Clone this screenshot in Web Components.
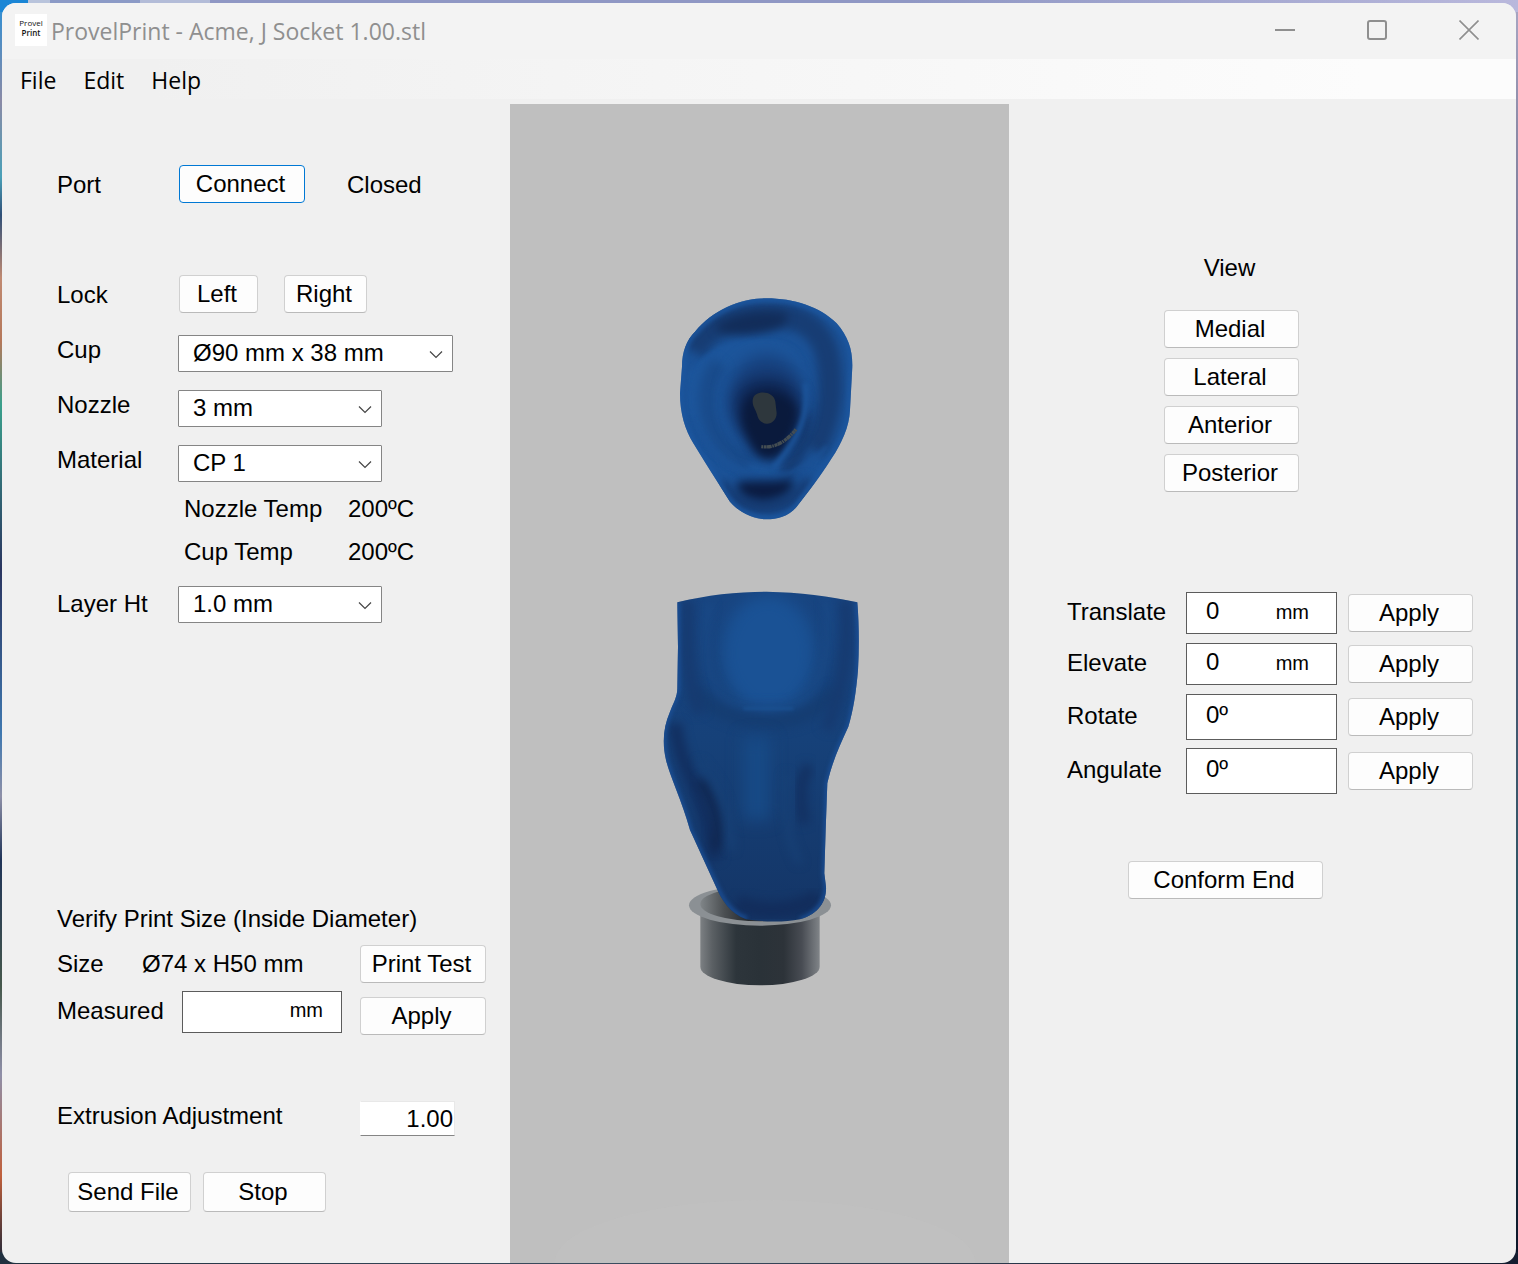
<!DOCTYPE html>
<html lang="en">
<head>
<meta charset="utf-8">
<title>ProvelPrint - Acme, J Socket 1.00.stl</title>
<style>
  body {
    margin: 0;
    min-height: 100vh;
    box-sizing: border-box;
    padding: 3px 2px 1px 2px;
    display: flex;
    font: 24px/30px "Liberation Sans", Arial, sans-serif;
    color: #000;
    background:
      linear-gradient(90deg, #1a86d6 0 28px, #b9c4dc 28px 50px, #8b9ac6 50px 140px, #b3bcd8 140px 210px, #8f97c4 210px 60%, #b9b8dc) top / 100% 12px no-repeat,
      linear-gradient(90deg, #20303f, #3b4d60 40%, #141d30) bottom / 100% 12px no-repeat,
      linear-gradient(#a9a7c4, #8d8ba8 10%, #5b5f80 40%, #20505c 80%, #0b1226) right / 8px 100% no-repeat,
      linear-gradient(#2b8fd6, #8a8aa6 8%, #4aa0b8 14%, #305078 17%, #c08a72 22%, #b5785a 27%, #3aa08c 32%, #2a3560 45%, #3f78b0 58%, #8e90a8 63%, #203458 68%, #46584c 78%, #8f8fa8 85%, #c0603c 93%, #182438) #4a5878;
  }
  pp-window { flex: 1; }
  pp-stack.settings { padding: 66px 0 51px 55px; }
  pp-stack.adjust { padding: 154px 0 51px 58px; }
</style>
</head>
<body>
<pp-window caption="ProvelPrint - Acme, J Socket 1.00.stl">
  <pp-stack class="settings" slot="left">
    <pp-line label="Port" style="--gap:42px">
      <pp-button primary style="--w:126px">Connect</pp-button><span>Closed</span>
    </pp-line>
    <pp-line label="Lock" style="--gap:26px;margin-top:72px">
      <pp-button style="--w:79px">Left</pp-button><pp-button style="--w:83px">Right</pp-button>
    </pp-line>
    <pp-select label="Cup" options="Ø90 mm x 38 mm" style="--w:275px;margin-top:22px"></pp-select>
    <pp-select label="Nozzle" options="3 mm" style="margin-top:18px"></pp-select>
    <pp-select label="Material" options="CP 1" style="margin-top:18px"></pp-select>
    <pp-temps style="margin-top:5px"></pp-temps>
    <pp-select label="Layer Ht" options="1.0 mm" style="--label-line:36px;margin-top:13px"></pp-select>
    <pp-verify style="margin-top:auto"></pp-verify>
    <pp-field plain label="Extrusion Adjustment" value="1.00" style="--label-col:303px;--w:95px;--h:35px;margin-top:66px"></pp-field>
    <pp-group style="--gap:12px;margin:36px 0 0 11px">
      <pp-button style="--w:123px;--h:40px">Send File</pp-button><pp-button style="--w:123px;--h:40px">Stop</pp-button>
    </pp-group>
  </pp-stack>
  <pp-viewport slot="centre"></pp-viewport>
  <pp-stack class="adjust" slot="right">
    <pp-views></pp-views>
    <pp-group style="--gap:11px;margin-top:100px">
      <pp-field label="Translate" value="0" unit="mm"></pp-field><pp-button style="--w:125px">Apply</pp-button>
    </pp-group>
    <pp-group style="--gap:11px;margin-top:9px">
      <pp-field label="Elevate" value="0" unit="mm"></pp-field><pp-button style="--w:125px">Apply</pp-button>
    </pp-group>
    <pp-group style="--gap:11px;margin-top:9px">
      <pp-field label="Rotate" value="0º" style="--h:46px"></pp-field><pp-button style="--w:125px">Apply</pp-button>
    </pp-group>
    <pp-group style="--gap:11px;margin-top:8px">
      <pp-field label="Angulate" value="0º" style="--h:46px"></pp-field><pp-button style="--w:125px">Apply</pp-button>
    </pp-group>
    <pp-group style="margin:67px 0 0 61px"><pp-button style="--w:195px">Conform End</pp-button></pp-group>
  </pp-stack>
</pp-window>

<script>
const define = (name, render) => customElements.define(name, class extends HTMLElement {
  constructor() {
    super();
    this.attachShadow({ mode: "open" }).innerHTML = render(this);
  }
});
const attr = (el, name) => el.getAttribute(name) || "";

define("pp-window", el => `
<style>
  :host { display: flex; flex-direction: column; border-radius: 14px; overflow: hidden; background: #f0f0f0; }
  header { display: flex; align-items: center; height: 56px; background: #f3f3f3; color: #8f8f8f; font: 23px/30px "Open Sans", "Noto Sans", sans-serif; }
  .logo { width: 32px; height: 24px; padding: 4px 0; margin: 0 4px 2px 13px; background: #fff; color: #111; font: 8px/10px "Open Sans", sans-serif; text-align: center; }
  .logo b { display: block; font-weight: 600; }
  h1 { flex: 1; margin: 0; font: inherit; }
  header button { width: 92px; height: 56px; padding: 0 2px 2px 0; border: 0; background: none; display: flex; align-items: center; justify-content: center; }
  nav { display: flex; gap: 26px; height: 40px; padding: 0 17px; background: linear-gradient(90deg, #f0f0f0 10%, #fcfcfc 90%); }
  nav button { padding: 0 0 0 1px; border: 0; background: none; color: #000; font: 23px/42px "Open Sans", "Noto Sans", sans-serif; }
  main { flex: 1; display: grid; grid-template-columns: 508fr 499fr 507fr; }
  slot { display: grid; min-width: 0; }
  svg { fill: none; stroke: #8f8f8f; stroke-width: 2; }
</style>
<header>
  <div class="logo">Provel<b>Print</b></div>
  <h1>${attr(el, "caption")}</h1>
  <button aria-label="Minimize"><svg width="20" height="20"><path d="M0 10H20"/></svg></button>
  <button aria-label="Maximize"><svg width="20" height="20"><rect x="1" y="1" width="18" height="18" rx="2"/></svg></button>
  <button aria-label="Close"><svg width="20" height="20"><path d="M.5 .5 19.5 19.5M19.5 .5.5 19.5" stroke-width="1.6"/></svg></button>
</header>
<nav><button>File</button><button>Edit</button><button>Help</button></nav>
<main><slot name="left"></slot><slot name="centre"></slot><slot name="right"></slot></main>`);

define("pp-stack", () => `
<style>:host { display: flex; flex-direction: column; box-sizing: border-box; }</style><slot></slot>`);

define("pp-group", () => `
<style>:host { display: flex; align-items: center; gap: var(--gap, 0); }</style><slot></slot>`);

define("pp-line", el => `
<style>
  :host { display: grid; grid-template-columns: 122px auto; height: 38px; line-height: 40px; }
  div { display: flex; align-items: flex-start; gap: var(--gap); }
</style><span>${attr(el, "label")}</span><div><slot></slot></div>`);

define("pp-button", el => `
<style>
  :host { display: block; }
  button { display: block; box-sizing: border-box; width: var(--w, 135px); height: var(--h, 38px); padding: 0 3px 0 0; border: 1px solid #d0d0d0; border-bottom-color: #bababa; border-radius: 4px; background: #fdfdfd; color: #000; font: inherit; line-height: 36px; white-space: nowrap; }
  :host([primary]) button { border-color: #0078d4; }
</style><button><slot></slot></button>`);

define("pp-select", el => `
<style>
  :host { display: grid; grid-template-columns: 121px var(--w, 204px); align-items: start; }
  label { line-height: var(--label-line, 30px); }
  div { display: grid; align-items: center; }
  select, svg { grid-area: 1 / 1; }
  select { appearance: none; box-sizing: border-box; height: 37px; margin: 0; padding: 0 34px 1px 14px; border: 1px solid #858585; border-radius: 1px; background: #fff; color: #000; font: inherit; }
  svg { justify-self: end; margin: 2px 10px 0 0; pointer-events: none; }
</style>
<label for="s">${attr(el, "label")}</label>
<div><select id="s"><option>${attr(el, "options")}</option></select>
<svg width="14" height="9" fill="none" stroke="#444" stroke-width="1.2"><path d="M1 1.5 7 7.5 13 1.5"/></svg></div>`);

define("pp-field", el => `
<style>
  :host { display: grid; grid-template-columns: var(--label-col, 119px) var(--w, 151px); align-items: center; }
  label { line-height: 30px; padding-bottom: 2px; }
  div { box-sizing: border-box; height: var(--h, 42px); display: flex; align-items: baseline; padding: var(--pad, 3px 27px 0 19px); border: 1px solid #5c5c5c; background: #fff; }
  input { flex: 1; min-width: 0; width: 0; height: calc(var(--h, 42px) - 12px); box-sizing: border-box; margin: 0; padding: 0; border: 0; outline: 0; background: none; color: #000; font: inherit; }
  span { font-size: 20px; }
  :host([plain]) { align-items: start; }
  :host([plain]) label { padding: 0; }
  :host([plain]) div { padding: 1px 1px 0; border-color: #e8e8e8 #e8e8e8 #858585 #fff; }
  :host([plain]) input { text-align: right; height: 32px; }
</style>
<label for="i">${attr(el, "label")}</label>
<div><input id="i" value="${attr(el, "value")}">${attr(el, "unit") ? `<span>${attr(el, "unit")}</span>` : ""}</div>`);

define("pp-temps", () => `
<style>
  :host { display: block; padding-left: 127px; }
  dl { display: grid; grid-template-columns: 164px auto; margin: 0; line-height: 43px; }
  dd { margin: 0; }
</style>
<dl><dt>Nozzle Temp</dt><dd>200ºC</dd><dt>Cup Temp</dt><dd>200ºC</dd></dl>`);

define("pp-verify", () => `
<style>
  :host { display: block; }
  h2 { margin: 0 0 11px; font: inherit; }
  .cols { display: grid; grid-template-columns: 303px auto; }
  .size { display: grid; grid-template-columns: 85px auto; line-height: 38px; margin-bottom: 8px; }
  .buttons { display: flex; flex-direction: column; gap: 14px; --w: 126px; }
  pp-field { --label-col: 125px; --w: 160px; --pad: 2px 18px 0; }
</style>
<h2>Verify Print Size (Inside Diameter)</h2>
<div class="cols">
  <div>
    <div class="size"><span>Size</span><span>Ø74 x H50 mm</span></div>
    <pp-field label="Measured" unit="mm"></pp-field>
  </div>
  <div class="buttons"><pp-button>Print Test</pp-button><pp-button>Apply</pp-button></div>
</div>`);

define("pp-views", () => `
<style>
  :host { display: flex; flex-direction: column; gap: 10px; width: 135px; margin-left: 97px; }
  h2 { margin: 0 0 17px; padding-right: 4px; font: inherit; text-align: center; }
</style>
<h2>View</h2>
<pp-button>Medial</pp-button><pp-button>Lateral</pp-button><pp-button>Anterior</pp-button><pp-button>Posterior</pp-button>`);

define("pp-viewport", () => `
<style>
  :host { display: block; margin-top: 5px; background: #bfbfbf; }
  svg { display: block; width: 100%; }
  filter { color-interpolation-filters: sRGB; }
</style>
<svg viewBox="510 104 499 1159" role="img" aria-label="Socket model, top and front views">
  <defs>
    <filter id="b6" x="-50%" y="-50%" width="200%" height="200%"><feGaussianBlur stdDeviation="6"/></filter>
    <filter id="b14" x="-60%" y="-60%" width="220%" height="220%"><feGaussianBlur stdDeviation="14"/></filter>
    <filter id="b24" x="-80%" y="-80%" width="260%" height="260%"><feGaussianBlur stdDeviation="24"/></filter>
    <filter id="v24" filterUnits="userSpaceOnUse" x="200" y="350" width="320" height="500"><feGaussianBlur stdDeviation="24"/></filter>
    <filter id="h6" filterUnits="userSpaceOnUse" x="250" y="350" width="270" height="70"><feGaussianBlur stdDeviation="5"/></filter>
    <filter id="edge"><feGaussianBlur stdDeviation="1.2"/></filter>
    <linearGradient id="body"><stop offset="0" stop-color="#7c8083"/><stop offset=".1" stop-color="#5b6064"/><stop offset=".3" stop-color="#2d353b"/><stop offset=".5" stop-color="#2a3238"/><stop offset=".7" stop-color="#2d3339"/><stop offset=".85" stop-color="#484c53"/><stop offset="1" stop-color="#808488"/></linearGradient>
    <linearGradient id="inside"><stop offset="0" stop-color="#808588"/><stop offset=".2" stop-color="#4b4f52"/><stop offset=".4" stop-color="#24292e"/><stop offset="1" stop-color="#777c80"/></linearGradient>
    <linearGradient id="front" x1="0" y1="0" x2="0" y2="1"><stop offset="0" stop-color="#184581"/><stop offset=".45" stop-color="#164179"/><stop offset="1" stop-color="#143566"/></linearGradient>
    <path id="topShape" d="M320 55C400 55 480 80 530 130C565 170 578 210 577 260L570 390C568 440 545 490 515 535C480 590 450 630 410 680C385 710 350 718 320 718C285 718 240 700 210 665C175 610 140 555 100 490C75 450 60 400 60 340L66 260C66 215 80 180 105 155C160 90 240 55 320 55Z"/>
    <path id="frontShape" d="M112 67C200 45 290 35 380 35C480 37 570 48 652 67C657 130 658 200 654 270C648 340 640 390 625 440C600 495 578 540 562 610L557 750L553 880L558 920C560 960 540 1000 480 1018C430 1028 370 1026 318 1018C270 1000 245 960 230 925L150 750C125 660 90 590 78 540C66 490 70 440 90 395C100 370 112 350 112 325L114 200Z"/>
    <clipPath id="topClip"><use href="#topShape"/></clipPath>
    <clipPath id="frontClip"><use href="#frontShape"/></clipPath>
  </defs>
  <ellipse cx="765" cy="1262" rx="210" ry="62" fill="#c2c2c2" opacity=".35"/>
  <g transform="translate(660 280) scale(.33333)">
    <use href="#topShape" fill="#1b5297" filter="url(#edge)"/>
    <g clip-path="url(#topClip)">
      <path d="M100 215C150 125 240 105 340 105C430 110 490 150 505 240C520 330 510 420 460 510" fill="none" stroke="#173d74" stroke-width="72" filter="url(#b14)"/>
      <path d="M170 135C230 95 320 85 380 100C390 125 370 145 320 155C260 170 200 165 170 150Z" fill="#122d5a" filter="url(#b14)"/>
      <path d="M85 280C140 210 200 176 320 178C390 180 430 230 445 300C460 380 430 480 380 590C260 610 150 540 100 440C80 390 75 340 85 280Z" fill="#1c559b" filter="url(#b6)"/>
      <path d="M180 250C130 310 130 400 175 470C200 510 230 530 270 550" fill="none" stroke="#194b8b" stroke-width="50" filter="url(#b14)"/>
      <path d="M430 400C450 450 430 520 370 580" fill="none" stroke="#163c73" stroke-width="44" filter="url(#b14)"/>
      <ellipse cx="320" cy="360" rx="118" ry="135" fill="#17407c" filter="url(#b24)"/>
      <path d="M235 340C260 285 370 275 405 335C435 385 410 450 375 510C345 545 305 545 280 505C250 450 210 400 235 340Z" fill="#0e2450" filter="url(#b24)"/>
      <path d="M250 385C260 320 380 320 410 385C415 440 385 480 358 520C330 545 295 535 280 500C260 460 240 430 250 385Z" fill="#0a1a3c" filter="url(#b14)"/>
      <path d="M435 310C450 400 420 470 340 565" fill="none" stroke="#1c559b" stroke-width="14" filter="url(#b6)"/>
      <path d="M95 420C150 530 230 590 320 592C390 590 450 560 500 500" fill="none" stroke="#1b5195" stroke-width="10" filter="url(#b6)"/>
      <path d="M180 610C250 710 380 710 450 600" fill="none" stroke="#163c74" stroke-width="40" filter="url(#b14)"/>
      <path d="M230 606C280 598 340 606 395 596C415 625 370 660 310 664C260 660 230 640 230 606Z" fill="#0b1c42" filter="url(#b14)"/>
      <path d="M320 58C400 58 480 83 528 132C563 172 575 210 574 260L567 390C565 440 542 490 512 533L410 677C385 707 350 714 320 714C285 714 240 698 212 663L103 490C78 450 63 400 63 340L69 260C69 215 83 180 108 157C160 93 240 58 320 58Z" fill="none" stroke="#1c57a0" stroke-width="12" filter="url(#b6)"/>
    </g>
    <path d="M300 338C320 334 344 344 346 365L350 400C350 420 335 432 320 431C304 430 295 420 291 403C285 385 277 378 278 362C279 347 287 341 300 338Z" fill="#2e373d" filter="url(#edge)"/>
    <path d="M304 500C345 505 378 485 408 448" fill="none" stroke="#444d52" stroke-width="10" stroke-dasharray="5 2 9 1 14 2" filter="url(#edge)"/>
  </g>
  <g transform="translate(640 580) scale(.33333)">
    <path d="M181 1000V1160A179 56 0 0 0 539 1160V1000Z" fill="url(#body)"/>
    <ellipse cx="360" cy="976" rx="213" ry="61" fill="#8b9094"/>
    <ellipse cx="360" cy="972" rx="179" ry="52" fill="url(#inside)"/>
    <use href="#frontShape" fill="url(#front)" filter="url(#edge)"/>
    <g clip-path="url(#frontClip)">
      <ellipse cx="385" cy="220" rx="140" ry="175" fill="#1a5295" filter="url(#b24)"/>
      <path d="M210 70C180 210 200 340 290 380H460C540 340 580 240 560 60" fill="none" stroke="#1a4b89" stroke-width="16" filter="url(#b14)"/>
      <path d="M160 330C210 390 290 425 390 425C480 425 540 390 590 330" fill="none" stroke="#153d72" stroke-width="44" filter="url(#b14)"/>
      <path d="M145 60C140 180 140 300 180 400M615 60C630 200 610 320 560 450" fill="none" stroke="#163a70" stroke-width="36" filter="url(#b14)"/>
      <path d="M350 470V720" stroke="#174a86" stroke-width="80" filter="url(#v24)"/>
      <path d="M105 430C120 580 190 610 225 840" fill="none" stroke="#122f60" stroke-width="40" filter="url(#b14)"/>
      <path d="M180 600C235 680 240 740 225 810" fill="none" stroke="#10264f" stroke-width="28" filter="url(#b14)"/>
      <path d="M510 560C475 590 480 680 495 730" fill="none" stroke="#133162" stroke-width="34" filter="url(#b14)"/>
      <path d="M175 545C245 610 275 720 275 810M440 580C430 690 440 780 480 850" fill="none" stroke="#184379" stroke-width="14" filter="url(#b14)"/>
      <path d="M290 970C370 1005 480 995 535 950" fill="none" stroke="#122d5c" stroke-width="50" filter="url(#b14)"/>
      <path d="M112 67L114 325C112 350 100 370 90 395C70 440 66 490 78 540C90 590 125 660 150 750L235 930C255 975 290 1010 320 1016M652 67C657 130 658 200 654 270C648 340 640 390 625 440C600 495 578 540 562 610L557 750L553 880L558 920C560 960 530 1005 480 1018" fill="none" stroke="#1b519a" stroke-width="12" filter="url(#b6)"/>
      <path d="M310 386H460" stroke="#1b5293" stroke-width="7" filter="url(#h6)"/>
    </g>
  </g>
</svg>`);
</script>
</body>
</html>
